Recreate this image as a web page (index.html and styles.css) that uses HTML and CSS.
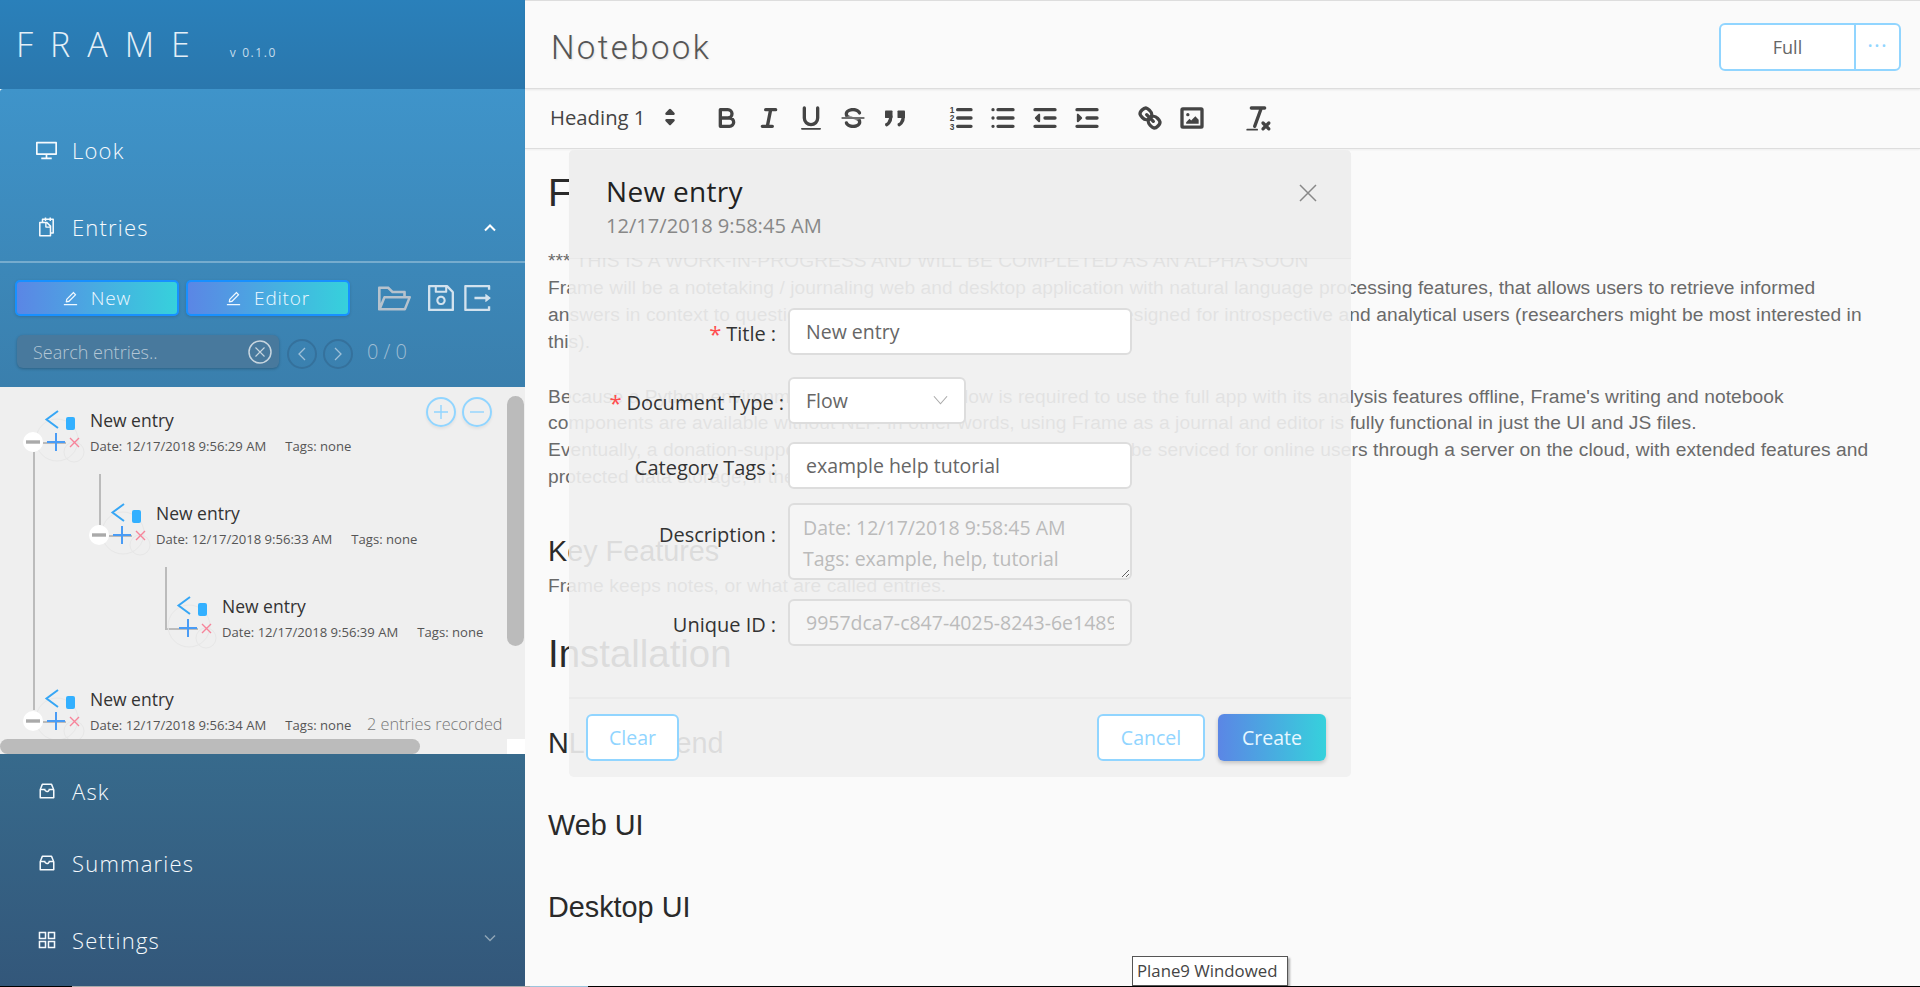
FILE: index.html
```html
<!DOCTYPE html>
<html lang="en">
<head>
<meta charset="utf-8">
<title>Frame</title>
<link rel="stylesheet" href="styles.css">
</head>
<body>
<svg class="defs" aria-hidden="true">
  <defs>
    <symbol id="i-inbox" viewBox="64 64 896 896"><path fill="currentColor" d="M885.2 446.3l-.2-.8-112.2-285.1c-5-16.1-19.9-27.2-36.8-27.2H281.2c-17 0-32.1 11.3-36.9 27.6L139.4 443l-.3.7-.2.8c-1.3 4.9-1.7 9.9-1 14.8-.1 1.6-.2 3.2-.2 4.8V830a60.9 60.9 0 0 0 60.8 60.8h627.2c33.5 0 60.8-27.3 60.9-60.8V464.1c0-1.3 0-2.6-.1-3.7.4-4.9 0-9.6-1.3-14.1zm-295.8-43l-.3 15.7c-.8 44.9-31.8 75.1-77.1 75.1-22.1 0-41.1-7.1-54.8-20.6S436 441.2 435.6 419l-.3-15.7H229.5L309 210h399.2l81.7 193.3H589.4zm-375 76.8h157.3c24.3 57.1 76 90.8 140.4 90.8 33.7 0 65-9.4 90.3-27.2 22.2-15.6 39.5-37.4 50.7-63.6h156.5V814H214.4V480.1z"/></symbol>
    <symbol id="i-edit" viewBox="64 64 896 896"><path fill="currentColor" d="M257.7 752c2 0 4-.2 6-.5L431.9 722c2-.4 3.9-1.3 5.3-2.8l423.9-423.9a9.96 9.96 0 0 0 0-14.1L694.9 114.9c-1.9-1.9-4.4-2.9-7.1-2.9s-5.2 1-7.1 2.9L256.8 538.8c-1.5 1.5-2.4 3.3-2.8 5.3l-29.5 168.2a33.5 33.5 0 0 0 9.4 29.8c6.6 6.4 14.9 9.9 23.8 9.9zm67.4-174.4L687.8 215l73.3 73.3-362.7 362.6-88.9 15.7 15.6-89zM880 836H144c-17.7 0-32 14.3-32 32v36c0 4.4 3.6 8 8 8h784c4.4 0 8-3.6 8-8v-36c0-17.7-14.3-32-32-32z"/></symbol>
    <symbol id="node-base" viewBox="0 0 90 93">
      <circle cx="57" cy="45" r="21" fill="none" stroke="#e7e7e7"/>
      <circle cx="74" cy="57" r="10" fill="none" stroke="#e7e7e7"/>
      <path d="M43 48H66" stroke="#bbb" stroke-width="2"/>
      <path d="M58 16L46.5 24.5L58 33" fill="none" stroke="#36a6f5" stroke-width="2"/>
      <rect x="66" y="22" width="9" height="13" rx="2" fill="#33b0ff"/>
      <path d="M56 38V56M47 47H65" stroke="#4a9cf5" stroke-width="2"/>
      <path d="M70 43L79 52M79 43L70 52" stroke="#f7849a" stroke-width="1.4"/>
    </symbol>
    <symbol id="node-minus" viewBox="0 0 90 93">
      <circle cx="33" cy="47" r="10" fill="#fff"/>
      <path d="M26 47H40" stroke="#aaa" stroke-width="3.4"/>
    </symbol>
  </defs>
</svg>
<div class="app">
  <aside class="sidebar">
    <div class="brand">
      <span class="brand-name">FRAME</span>
      <span class="brand-version">v 0.1.0</span>
    </div>
    <section class="panel-top">
      <div class="menu-item">
        <svg class="menu-icon" viewBox="64 64 896 896"><path fill="currentColor" d="M928 140H96c-17.7 0-32 14.3-32 32v496c0 17.7 14.3 32 32 32h380v112H304c-8.8 0-16 7.2-16 16v48c0 4.4 3.6 8 8 8h432c4.4 0 8-3.6 8-8v-48c0-8.8-7.2-16-16-16H548V700h380c17.7 0 32-14.3 32-32V172c0-17.7-14.3-32-32-32zm-40 488H136V212h752v416z"/></svg>
        <span>Look</span>
      </div>
      <div class="menu-item menu-open">
        <svg class="menu-icon" viewBox="64 64 896 896"><path fill="currentColor" d="M832 112H724V72c0-4.4-3.6-8-8-8h-56c-4.4 0-8 3.6-8 8v40H500V72c0-4.4-3.6-8-8-8h-56c-4.4 0-8 3.6-8 8v40H320c-17.7 0-32 14.3-32 32v120h-96c-17.7 0-32 14.3-32 32v632c0 17.7 14.3 32 32 32h512c17.7 0 32-14.3 32-32v-96h96c17.7 0 32-14.3 32-32V144c0-17.7-14.3-32-32-32zM664 888H232V336h218v174c0 22.1 17.9 40 40 40h174v338zm0-402H514V336h.2L664 485.8v.2zm128 274h-56V456L544 264H360v-80h68v32c0 4.4 3.6 8 8 8h56c4.4 0 8-3.6 8-8v-32h152v32c0 4.4 3.6 8 8 8h56c4.4 0 8-3.6 8-8v-32h68v576z"/></svg>
        <span>Entries</span>
        <svg class="caret caret-up" viewBox="0 0 12 8"><path d="M1 6.5L6 1.5L11 6.5" fill="none" stroke="currentColor" stroke-width="2"/></svg>
      </div>
      <div class="tool-row">
        <button class="grad-btn"><svg class="btn-icon"><use href="#i-edit"/></svg>New</button>
        <button class="grad-btn"><svg class="btn-icon"><use href="#i-edit"/></svg>Editor</button>
        <svg class="tool-icon tool-folder" viewBox="64 64 896 896"><path fill="currentColor" d="M928 444H820V330.4c0-17.7-14.3-32-32-32H473L355.7 186.2a8.15 8.15 0 0 0-5.5-2.2H96c-17.7 0-32 14.3-32 32v592c0 17.7 14.3 32 32 32h698c13 0 24.8-7.9 29.7-20l134-332c1.5-3.8 2.3-7.9 2.3-12 0-17.7-14.3-32-32-32zM136 256h188.5l119.6 114.4H748V444H238c-13 0-24.8 7.9-29.7 20L136 643.2V256zm635.3 512H159l103.3-256h612.4L771.3 768z"/></svg>
        <svg class="tool-icon tool-save" viewBox="112 112 800 800"><path fill="currentColor" d="M893.3 293.3L730.7 130.7c-7.5-7.5-16.7-13-26.7-16V112H144c-17.7 0-32 14.3-32 32v736c0 17.7 14.3 32 32 32h736c17.7 0 32-14.3 32-32V338.5c0-17-6.7-33.2-18.7-45.2zM384 184h256v104H384V184zm456 656H184V184h136v136c0 17.7 14.3 32 32 32h320c17.7 0 32-14.3 32-32V205.8l136 136V840zM512 442c-79.5 0-144 64.5-144 144s64.5 144 144 144 144-64.5 144-144-64.5-144-144-144zm0 224c-44.2 0-80-35.8-80-80s35.8-80 80-80 80 35.8 80 80-35.8 80-80 80z"/></svg>
        <svg class="tool-icon tool-export" viewBox="128 128 784 768"><path fill="currentColor" d="M888.3 757.4h-53.8c-4.2 0-7.7 3.5-7.7 7.7v61.8H197.1V197.1h629.8v61.8c0 4.2 3.5 7.7 7.7 7.7h53.8c4.2 0 7.7-3.4 7.7-7.7V158.7c0-17-13.7-30.7-30.7-30.7H158.7c-17 0-30.7 13.7-30.7 30.7v706.6c0 17 13.7 30.7 30.7 30.7h706.6c17 0 30.7-13.7 30.7-30.7V765.1c0-4.3-3.5-7.7-7.7-7.7zm18.6-251.7L765 393.7c-5.3-4.2-13-.4-13 6.3v76H438c-4.4 0-8 3.6-8 8v56c0 4.4 3.6 8 8 8h314v76c0 6.7 7.8 10.5 13 6.3l141.9-112a8 8 0 0 0 0-12.6z"/></svg>
      </div>
      <div class="search-row">
        <div class="search-box">
          <span class="search-text">Search entries..</span>
          <svg class="search-clear" viewBox="0 0 24 24"><circle cx="12" cy="12" r="11" fill="none" stroke="currentColor" stroke-width="1.5"/><path d="M7.5 7.5L16.5 16.5M16.5 7.5L7.5 16.5" stroke="currentColor" stroke-width="1.1"/></svg>
        </div>
        <span class="nav-circle"><svg viewBox="0 0 12 16"><path d="M9 2L3 8L9 14" fill="none" stroke="currentColor" stroke-width="1.3"/></svg></span>
        <span class="nav-circle"><svg viewBox="0 0 12 16"><path d="M3 2L9 8L3 14" fill="none" stroke="currentColor" stroke-width="1.3"/></svg></span>
        <span class="search-count">0 / 0</span>
      </div>
    </section>
    <section class="tree">
      <svg class="tree-lines" viewBox="0 0 525 367">
        <path d="M34 65V323M100 87V138M166 180V242H198" fill="none" stroke="#bbb" stroke-width="2"/>
      </svg>
      <div class="tree-rows">
        <div class="node">
          <svg class="node-glyph"><use href="#node-base"/><use href="#node-minus"/></svg>
          <div class="node-info"><div class="node-title">New entry</div><div class="node-meta"><span>Date: 12/17/2018 9:56:29 AM</span><span>Tags: none</span></div></div>
        </div>
        <div class="node depth-1">
          <svg class="node-glyph"><use href="#node-base"/><use href="#node-minus"/></svg>
          <div class="node-info"><div class="node-title">New entry</div><div class="node-meta"><span>Date: 12/17/2018 9:56:33 AM</span><span>Tags: none</span></div></div>
        </div>
        <div class="node depth-2">
          <svg class="node-glyph"><use href="#node-base"/></svg>
          <div class="node-info"><div class="node-title">New entry</div><div class="node-meta"><span>Date: 12/17/2018 9:56:39 AM</span><span>Tags: none</span></div></div>
        </div>
        <div class="node">
          <svg class="node-glyph"><use href="#node-base"/><use href="#node-minus"/></svg>
          <div class="node-info"><div class="node-title">New entry</div><div class="node-meta"><span>Date: 12/17/2018 9:56:34 AM</span><span>Tags: none</span></div></div>
        </div>
      </div>
      <div class="zoom-btns">
        <span class="zoom-btn"><svg viewBox="0 0 16 16"><path d="M8 1V15M1 8H15" stroke="currentColor" stroke-width="1.4"/></svg></span>
        <span class="zoom-btn"><svg viewBox="0 0 16 16"><path d="M1 8H15" stroke="currentColor" stroke-width="1.4"/></svg></span>
      </div>
      <div class="recorded">2 entries recorded</div>
      <div class="scroll-v"></div>
      <div class="scroll-h"></div>
      <div class="scroll-corner"></div>
    </section>
    <section class="panel-bottom">
      <div class="menu-item menu-low"><svg class="menu-icon small"><use href="#i-inbox"/></svg><span>Ask</span></div>
      <div class="menu-item menu-low"><svg class="menu-icon small"><use href="#i-inbox"/></svg><span>Summaries</span></div>
      <div class="menu-item menu-low menu-set">
        <svg class="menu-icon small" viewBox="112 112 800 800"><path fill="currentColor" d="M464 144H160c-8.800 0-16 7.200-16 16v304c0 8.800 7.200 16 16 16h304c8.800 0 16-7.200 16-16V160c0-8.800-7.200-16-16-16zm-52 268H212V212h200v200zm452-268H560c-8.800 0-16 7.200-16 16v304c0 8.800 7.200 16 16 16h304c8.800 0 16-7.200 16-16V160c0-8.800-7.200-16-16-16zm-52 268H612V212h200v200zM464 544H160c-8.800 0-16 7.200-16 16v304c0 8.800 7.200 16 16 16h304c8.800 0 16-7.200 16-16V560c0-8.800-7.200-16-16-16zm-52 268H212V612h200v200zm452-268H560c-8.800 0-16 7.200-16 16v304c0 8.800 7.200 16 16 16h304c8.800 0 16-7.200 16-16V560c0-8.800-7.200-16-16-16zm-52 268H612V612h200v200z"/></svg>
        <span>Settings</span>
        <svg class="caret caret-down" viewBox="0 0 12 8"><path d="M1 1.500L6 6.500L11 1.500" fill="none" stroke="currentColor" stroke-width="1.500"/></svg>
      </div>
    </section>
  </aside>

  <main class="main">
    <header class="main-head">
      <h1 class="page-title">Notebook</h1>
      <div class="split-btn"><span class="split-main">Full</span><span class="split-more">···</span></div>
    </header>
    <div class="editor-bar">
      <div class="picker">
        <span>Heading 1</span>
        <svg class="picker-arrows" viewBox="0 0 18 18"><path d="M7 7L9 5L11 7ZM7 11L9 13L11 11Z" fill="#444" stroke="#444" stroke-width="1.700" stroke-linejoin="round"/></svg>
      </div>
      <div class="ql-group">
        <svg class="ql" viewBox="0 0 18 18"><path d="M5 4H9.500A2.500 2.500 0 0 1 12 6.500A2.500 2.500 0 0 1 9.500 9H5ZM5 9H10.500A2.500 2.500 0 0 1 13 11.500A2.500 2.500 0 0 1 10.500 14H5Z"/></svg>
        <svg class="ql" viewBox="0 0 18 18"><path d="M7 4H13M5 14H11M8 14L10 4"/></svg>
        <svg class="ql" viewBox="0 0 18 18"><path d="M5 3V9A4 4 0 0 0 9 13A4 4 0 0 0 13 9V3"/><rect class="ql-fill" x="3" y="15" width="12" height="1" rx=".5"/></svg>
        <svg class="ql" viewBox="0 0 18 18"><path class="thin" d="M2.500 9H15.500"/><path class="ql-fill" d="M9.007 8C6.542 7.791 6 7.519 6 6.500 6 5.792 7.283 5 9 5c1.571 0 2.765.679 2.969 1.309a1 1 0 0 0 1.900-.617C13.356 4.106 11.354 3 9 3 6.200 3 4 4.538 4 6.500a3.200 3.200 0 0 0 .5 1.843Z"/><path class="ql-fill" d="M8.984 10C11.457 10.208 12 10.479 12 11.500c0 .708-1.283 1.500-3 1.500-1.571 0-2.765-.679-2.969-1.309a1 1 0 1 0-1.900.617C4.644 13.894 6.646 15 9 15c2.800 0 5-1.538 5-3.500a3.200 3.200 0 0 0-.5-1.843Z"/></svg>
        <svg class="ql" viewBox="0 0 18 18"><rect class="ql-fill" x="3" y="4.500" width="4.500" height="4.500" rx=".5"/><rect class="ql-fill" x="10.500" y="4.500" width="4.500" height="4.500" rx=".5"/><path d="M6.500 8C6.500 12 4 13 4 13M14 8C14 12 11.500 13 11.500 13"/></svg>
      </div>
      <div class="ql-group">
        <svg class="ql" viewBox="0 0 18 18"><path d="M7 4H15M7 9H15M7 14H15"/><text class="ql-num" x="2.300" y="6">1</text><text class="ql-num" x="2.300" y="11">2</text><text class="ql-num" x="2.300" y="16">3</text></svg>
        <svg class="ql" viewBox="0 0 18 18"><path d="M6 4H15M6 9H15M6 14H15M3 4V4M3 9V9M3 14V14"/></svg>
        <svg class="ql" viewBox="0 0 18 18"><path d="M3 14H15M3 4H15M9 9H15"/><path class="ql-arrow" d="M5.500 7V11L3.500 9Z"/></svg>
        <svg class="ql" viewBox="0 0 18 18"><path d="M3 14H15M3 4H15M9 9H15"/><path class="ql-arrow" d="M3.500 7V11L5.500 9Z"/></svg>
      </div>
      <div class="ql-group tight">
        <svg class="ql" viewBox="0 0 18 18"><path d="M7 7L11 11"/><path d="M8.900 4.577a3.476 3.476 0 0 1 .36 4.679A3.476 3.476 0 0 1 4.577 8.900C3.185 7.500 2.035 6.400 4.217 4.217S7.500 3.185 8.900 4.577Z"/><path d="M13.423 9.100a3.476 3.476 0 0 0-4.679-.36 3.476 3.476 0 0 0 .36 4.679c1.392 1.392 2.500 2.542 4.679.36S14.815 10.500 13.423 9.100Z"/></svg>
        <svg class="ql" viewBox="0 0 18 18"><rect x="3" y="3.500" width="12" height="11" rx=".5"/><circle class="ql-fill" cx="6.500" cy="7" r="1"/><path class="ql-fill" d="M5.500 12.500V11.500L7.500 9.500L8.500 10.500L11 8L13 10V12.500Z"/></svg>
      </div>
      <div class="ql-group">
        <svg class="ql" viewBox="0 0 18 18"><path d="M5 3H13M11 3L7 14M12 12L15.500 15.500M15.500 12L12 15.500"/><rect class="ql-fill" x="2" y="15.500" width="7" height="1" rx=".5"/></svg>
      </div>
    </div>
    <article class="doc">
      <h2 class="doc-h1 first">Frame</h2>
      <p class="doc-p">*** THIS IS A WORK-IN-PROGRESS AND WILL BE COMPLETED AS AN ALPHA SOON<br>Frame will be a notetaking / journaling web and desktop application with natural language processing features, that allows users to retrieve informed answers in context to questions they may ask of their entries. It is designed for introspective and analytical users (researchers might be most interested in this).</p>
      <p class="doc-p">Because a Python environment with the TensorFlow is required to use the full app with its analysis features offline, Frame's writing and notebook components are available without NLP. In other words, using Frame as a journal and editor is fully functional in just the UI and JS files.<br>Eventually, a donation-supported version of the NLP processing will be serviced for online users through a server on the cloud, with extended features and protected data storage, if they wish.</p>
      <h3 class="doc-h2 key">Key Features</h3>
      <p class="doc-p tight">Frame keeps notes, or what are called entries.</p>
      <h2 class="doc-h1">Installation</h2>
      <h3 class="doc-h2">NLP Backend</h3>
      <h3 class="doc-h2">Web UI</h3>
      <h3 class="doc-h2">Desktop UI</h3>
    </article>

    <div class="modal">
      <div class="modal-head">
        <div class="modal-title">New entry</div>
        <div class="modal-date">12/17/2018 9:58:45 AM</div>
        <svg class="modal-close" viewBox="0 0 18 18"><path d="M1 1L17 17M17 1L1 17" stroke="currentColor" stroke-width="1.500"/></svg>
      </div>
      <div class="modal-body">
        <div class="form-row"><label class="form-label"><i class="req">*</i>Title<b>:</b></label><div class="field">New entry</div></div>
        <div class="form-row gap-22"><label class="form-label wide"><i class="req">*</i>Document Type<b>:</b></label><div class="field select">Flow<svg class="select-arrow" viewBox="0 0 16 10"><path d="M1 1L8 9L15 1" fill="none" stroke="currentColor" stroke-width="1.200"/></svg></div></div>
        <div class="form-row gap-18"><label class="form-label">Category Tags<b>:</b></label><div class="field">example help tutorial</div></div>
        <div class="form-row gap-14"><label class="form-label area-label">Description<b>:</b></label><textarea class="field area" readonly>Date: 12/17/2018 9:58:45 AM
Tags: example, help, tutorial</textarea></div>
        <div class="form-row gap-19"><label class="form-label">Unique ID<b>:</b></label><div class="field off"><span class="clip">9957dca7-c847-4025-8243-6e1489a0c2d1</span></div></div>
      </div>
      <div class="modal-foot">
        <button class="ghost clear">Clear</button>
        <button class="ghost cancel">Cancel</button>
        <button class="primary">Create</button>
      </div>
    </div>
  </main>
  <div class="taskline"></div>
  <div class="os-tip">Plane9 Windowed</div>
</div>
</body>
</html>
```
FILE: styles.css
```css
* { box-sizing: border-box; }
html, body { margin: 0; padding: 0; height: 100%; overflow: hidden; }
body { font-family: "Open Sans", "Noto Sans", sans-serif; background: #fafafa; }
.defs { position: absolute; width: 0; height: 0; }
.app { position: relative; display: flex; width: 1920px; height: 987px; overflow: hidden; }

/* sidebar */
.sidebar { width: 525px; flex: none; display: flex; flex-direction: column; color: #f6fafd; }
.brand { height: 89px; flex: none; background: linear-gradient(#2a80ba, #2a77ad); padding: 23px 0 0 16px; display: flex; align-items: baseline; }
.brand-name { font-size: 34px; font-weight: 300; letter-spacing: 17px; line-height: 42px; color: #e4eff7; }
.brand-version { font-size: 12px; letter-spacing: 1.600px; margin-left: 23px; color: #c4dcec; }
.panel-top { height: 298px; flex: none; padding-top: 23px; background: linear-gradient(#3f94ca, #3a7fad); border-radius: 3px 0 0 0; }
.menu-item { position: relative; display: flex; align-items: center; height: 78px; padding-left: 36px; font-size: 22px; letter-spacing: 1.200px; font-weight: 300; }
.panel-top .menu-item { padding-bottom: 2px; }
.menu-open { height: 73px; padding-top: 5px; border-bottom: 2px solid rgba(255,255,255,.3); }
.menu-icon { width: 21px; height: 21px; margin-right: 15px; flex: none; }
.menu-icon.small { width: 18px; height: 18px; margin-left: 2px; margin-right: 16px; }
.menu-open .menu-icon { width: 19px; height: 22px; margin-left: 1px; margin-right: 16px; }
.caret { position: absolute; left: 484px; width: 12px; height: 8px; }
.caret-up { top: 34px; color: #fff; }
.caret-down { top: 35px; color: #8fa5b6; }
.tool-row { display: flex; align-items: center; height: 36px; margin-top: 17px; padding-left: 15px; }
.grad-btn { display: flex; align-items: center; justify-content: center; width: 164px; height: 36px; margin-right: 7px; padding: 0; border: 2px solid #1890ff; border-radius: 5px; background: linear-gradient(90deg, #5b86e5, #36d1dc); color: #eef8ff; font: 300 19px "Open Sans", sans-serif; letter-spacing: .8px; box-shadow: 0 1px 3px rgba(0,0,0,.15); }
.btn-icon { width: 15px; height: 15px; margin-right: 13px; }
.tool-icon { flex: none; }
.tool-folder { width: 33px; height: 33px; margin-left: 21px; color: #b6c2cd; }
.tool-save { width: 26px; height: 26px; margin-left: 17px; color: #d2e2ee; }
.tool-export { width: 27px; height: 26px; margin-left: 10px; color: #d2e2ee; }
.search-row { display: flex; align-items: center; height: 33px; margin-top: 19px; padding-left: 17px; }
.search-box { position: relative; width: 262px; height: 33px; padding-left: 16px; border-radius: 6px; background: #48799d; box-shadow: 0 1px 3px rgba(0,0,0,.25); display: flex; align-items: center; }
.search-text { font-size: 18px; font-weight: 300; color: #b4c7d5; }
.search-clear { position: absolute; left: 231px; top: 5px; width: 24px; height: 24px; color: #c7d5df; }
.nav-circle { display: flex; align-items: center; justify-content: center; width: 30px; height: 30px; margin-left: 6px; border: 2px solid #35719c; border-radius: 50%; color: #9fc0d8; position: relative; top: 2px; }
.search-box + .nav-circle { margin-left: 8px; }
.nav-circle svg { width: 12px; height: 16px; }
.search-count { margin-left: 14px; font-size: 20px; font-weight: 300; color: #9fbdd3; }

/* tree */
.tree { position: relative; height: 367px; flex: none; background: #efefef; color: #333; overflow: hidden; }
.tree-lines { position: absolute; left: 0; top: 0; width: 525px; height: 367px; }
.tree-rows { position: relative; padding-top: 8px; }
.node { display: flex; height: 93px; }
.depth-1 { margin-left: 66px; }
.depth-2 { margin-left: 132px; }
.node-glyph { width: 90px; height: 93px; flex: none; }
.node-info { padding-top: 13px; }
.node-title { font-size: 17.500px; line-height: 24px; color: #333; font-weight: 400; }
.node-meta { display: flex; gap: 19px; margin-top: 5px; font-size: 13.100px; line-height: 18px; color: #555; font-weight: 400; }
.zoom-btns { position: absolute; left: 426px; top: 10px; display: flex; gap: 6px; }
.zoom-btn { display: flex; align-items: center; justify-content: center; width: 30px; height: 30px; border: 2px solid #91d5ff; border-radius: 50%; color: #91d5ff; box-shadow: 0 2px 3px rgba(0,0,0,.06); }
.zoom-btn svg { width: 16px; height: 16px; }
.recorded { position: absolute; left: 367px; top: 326px; font-size: 16.300px; font-weight: 300; color: #777; }
.scroll-v { position: absolute; left: 507px; top: 9px; width: 17px; height: 250px; border-radius: 9px; background: #bbb; }
.scroll-h { position: absolute; left: 0; top: 352px; width: 420px; height: 15px; border-radius: 8px; background: #bbb; }
.scroll-corner { position: absolute; left: 507px; top: 352px; width: 18px; height: 15px; background: #fff; }
.panel-bottom { flex: 1; background: linear-gradient(#376a8c, #33577a); padding-top: 1px; }
.menu-low { height: 72px; }
.menu-set { height: 82px; }

/* main */
.main { position: relative; flex: 1; display: flex; flex-direction: column; min-width: 0; background: #fafafa; }
.main-head { height: 89px; flex: none; display: flex; align-items: center; justify-content: space-between; padding: 0 19px 1px 26px; border-top: 1px solid #ddd; border-bottom: 1px solid #ddd; box-shadow: 0 1px 2px rgba(0,0,0,.08); }
.page-title { margin: 7px 0 0; font: 300 33px/1 Roboto, sans-serif; letter-spacing: 2.400px; color: #555; text-shadow: 1px 1px 2px rgba(0,0,0,.1); }
.split-btn { display: flex; width: 182px; height: 48px; margin-top: 6px; background: #fff; border: 2px solid #91d5ff; border-radius: 6px; }
.split-main { width: 135px; border-right: 2px solid #91d5ff; text-align: center; font-size: 18px; line-height: 44px; color: #666; }
.split-more { flex: 1; text-align: center; color: #91d5ff; font-size: 22px; line-height: 38px; letter-spacing: 1px; }
.editor-bar { height: 60px; flex: none; display: flex; align-items: center; padding: 0 0 2px 25px; border-bottom: 1px solid #ddd; box-shadow: 0 1px 2px rgba(0,0,0,.05); }
.picker { display: flex; align-items: center; width: 156px; font: 400 20.300px "Open Sans", sans-serif; color: #444; position: relative; top: -1px; }
.picker-arrows { width: 30px; height: 30px; margin-left: 10px; }
.ql-group { display: flex; }
.ql-group + .ql-group { margin-left: 24px; }
.ql-group.tight { margin-left: 21px; }
.ql { width: 42px; height: 30px; fill: none; stroke: #444; stroke-width: 2; stroke-linecap: round; stroke-linejoin: round; }
.ql-fill { fill: #444; stroke: none; }
.ql-arrow { fill: #444; stroke-width: 1.200; }
.ql .thin { stroke-width: 1; }
.ql-num { font: 700 5px "Liberation Sans", sans-serif; fill: #444; stroke: none; }
.doc { padding: 0 40px 0 23px; font-family: "Liberation Sans", Arial, sans-serif; }
.doc-h1 { margin: 28px 0 42px; font-size: 38.400px; line-height: 54px; font-weight: 400; color: #2a2a2a; }
.doc-h1.first { margin: 17px 0 28px; }
.doc-h2 { margin: 0 0 42px; font-size: 28.800px; line-height: 40px; font-weight: 400; color: #2a2a2a; }
.doc-h2.key { margin: 40px 0 1.500px; }
.doc-p { margin: 0 0 28px; font-size: 19.200px; line-height: 26.880px; letter-spacing: .08px; color: #6a6a6a; }
.doc-p.tight { margin-bottom: 0; }

/* modal */
.modal { position: absolute; left: 44px; top: 150px; width: 782px; height: 627px; display: flex; flex-direction: column; border-radius: 5px; background: rgba(240,240,240,.9); }
.modal-head { position: relative; height: 108px; flex: none; padding: 23px 0 0 37px; background: #eee; border-radius: 5px 5px 0 0; box-shadow: 0 1px 1px rgba(0,0,0,.04); }
.modal-title { font-size: 28px; line-height: 36px; font-weight: 500; letter-spacing: .3px; color: #222; }
.modal-date { margin-top: 3px; font-size: 20.100px; line-height: 28px; font-weight: 400; color: #888; }
.modal-close { position: absolute; left: 730px; top: 34px; width: 18px; height: 18px; color: #888; }
.modal-body { flex: 1; padding-top: 50px; }
.form-row { display: flex; align-items: flex-start; }
.gap-22 { margin-top: 22px; }
.gap-19 { margin-top: 19px; }
.gap-18 { margin-top: 18px; }
.gap-14 { margin-top: 14px; }
.form-label { display: flex; justify-content: flex-end; align-items: center; width: 207px; height: 47px; padding-top: 3px; margin-right: 12px; font-size: 20px; color: #333; white-space: nowrap; }
.form-label.area-label { height: 59px; }
.form-label.wide { width: 215px; margin-right: 4px; }
.form-label b { font-weight: 400; margin-left: 5px; }
.req { font-style: normal; color: #ff4d4f; margin-right: 5px; font-size: 22px; }
.field { display: block; position: relative; width: 344px; height: 47px; padding: 2px 16px 0; border: 2px solid #ddd; border-radius: 6px; background: #fff; font: 400 19.500px/40px "Open Sans", sans-serif; color: #666; }
.select { width: 178px; }
.select-arrow { position: absolute; left: 143px; top: 16px; width: 15px; height: 10px; color: #aaa; }
.area { height: 77px; padding: 7px 13px; line-height: 31px; background: #f5f5f5; color: #bbb; resize: vertical; overflow: hidden; outline: none; }
.off { background: #f5f5f5; color: #bbb; }
.clip { display: block; overflow: hidden; white-space: nowrap; }
.modal-foot { display: flex; height: 80px; flex: none; padding: 15px 25px 0 17px; gap: 13px; border-top: 2px solid #ebebeb; }
.ghost, .primary { height: 47px; border-radius: 6px; font: 400 19.500px "Open Sans", sans-serif; padding: 0; }
.ghost { background: #fff; border: 2px solid #91d5ff; color: #91d5ff; }
.clear { width: 93px; margin-right: auto; }
.cancel, .primary { width: 108px; }
.primary { border: 0; background: linear-gradient(90deg, #5b86e5, #36d1dc); color: #e6f7ff; box-shadow: 0 2px 4px rgba(0,0,0,.2); }

/* desktop leftovers */
.taskline { position: absolute; left: 0; top: 986px; width: 1920px; height: 1px; background: linear-gradient(90deg, #000 72px, #aaa 72px, #aaa 530px, #9cc4dc 530px, #9cc4dc 588px, #000 588px); }
.os-tip { position: absolute; left: 1132px; top: 956px; width: 156px; height: 30px; padding-left: 4px; background: #fff; border: 1px solid #555; box-shadow: 2px 2px 2px rgba(0,0,0,.3); font-size: 16.800px; line-height: 28px; white-space: nowrap; overflow: hidden; color: #444; }
```
